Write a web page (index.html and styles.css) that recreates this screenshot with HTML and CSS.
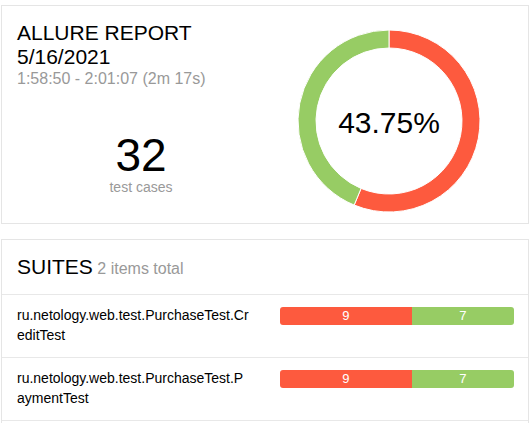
FILE: index.html
```html
<!DOCTYPE html>
<html>
<head>
<meta charset="utf-8">
<link rel="stylesheet" href="styles.css">
</head>
<body>
<div class="page">
  <section class="card summary">
    <div class="summary-left">
      <h1 class="title">ALLURE REPORT<br>5/16/2021</h1>
      <div class="subtitle">1:58:50 - 2:01:07 (2m 17s)</div>
      <div class="count">32</div>
      <div class="count-label">test cases</div>
    </div>
    <div class="summary-right">
      <svg class="donut" width="200" height="200" viewBox="0 0 200 200">
        <path class="arc-failed" d="M100,9 A91,91 0 1 1 65.176,184.073 L72.064,167.443 A73,73 0 1 0 100,27 Z"/>
        <path class="arc-passed" d="M65.176,184.073 A91,91 0 0 1 100,9 L100,27 A73,73 0 0 0 72.064,167.443 Z"/>
        <text class="donut-text" x="100" y="112" text-anchor="middle">43.75%</text>
      </svg>
    </div>
  </section>

  <section class="card suites">
    <div class="suites-head">
      <span class="suites-title">SUITES</span> <span class="suites-count">2 items total</span>
    </div>
    <div class="suite-row">
      <div class="suite-name">ru.netology.web.test.PurchaseTest.CreditTest</div>
      <div class="bar">
        <div class="bar-fill failed" style="flex: 9">9</div>
        <div class="bar-fill passed" style="flex: 7">7</div>
      </div>
    </div>
    <div class="suite-row">
      <div class="suite-name">ru.netology.web.test.PurchaseTest.PaymentTest</div>
      <div class="bar">
        <div class="bar-fill failed" style="flex: 9">9</div>
        <div class="bar-fill passed" style="flex: 7">7</div>
      </div>
    </div>
    <div class="suite-row"></div>
  </section>
</div>
</body>
</html>
```

FILE: styles.css
```css
* { box-sizing: border-box; }
html, body {
  margin: 0;
  padding: 0;
  background: #fff;
  font-family: "Liberation Sans", Arial, sans-serif;
  color: #000;
}
.page {
  padding: 5px 0 0 1px;
  width: 529px;
}
.card {
  width: 528px;
  border: 1px solid #e5e5e5;
  background: #fff;
}
.summary {
  display: flex;
  padding: 15px 15px 0 15px;
  height: 219px;
}
.summary-left {
  flex: 1;
  display: flex;
  flex-direction: column;
}
.summary-right {
  flex: 1;
  display: flex;
  justify-content: center;
}
.title {
  margin: 0;
  font-size: 21px;
  line-height: 24px;
  font-weight: normal;
}
.subtitle {
  font-size: 16px;
  line-height: 19px;
  color: #999;
}
.count {
  margin-top: 45px;
  font-size: 46px;
  line-height: 44px;
  text-align: center;
}
.count-label {
  font-size: 14px;
  line-height: 20px;
  color: #999;
  text-align: center;
}
.donut { display: block; }
.arc-failed { fill: #fd5a3e; stroke: #fff; stroke-width: 1; }
.arc-passed { fill: #97cc64; stroke: #fff; stroke-width: 1; }
.donut-text {
  font-family: "Liberation Sans", Arial, sans-serif;
  font-size: 30px;
  fill: #000;
}
.suites {
  margin-top: 15px;
}
.suites-head {
  padding: 15px;
  height: 55px;
  line-height: 24px;
  border-bottom: 1px solid #e8e8e8;
}
.suites-title { font-size: 21px; line-height: 24px; }
.suites-count { font-size: 16px; line-height: 16px; color: #999; }
.suite-row {
  display: grid;
  grid-template-columns: 233px 1fr;
  column-gap: 30px;
  padding: 10px 14px 12px 15px;
  border-bottom: 1px solid #e8e8e8;
  min-height: 63px;
}
.suite-name {
  font-size: 14px;
  line-height: 20px;
  word-break: break-all;
}
.bar {
  display: flex;
  height: 18px;
  margin-top: 2px;
  border-radius: 3px;
  overflow: hidden;
}
.bar-fill {
  color: #fff;
  font-size: 13px;
  line-height: 18px;
  text-align: center;
}
.bar-fill.failed { background: #fd5a3e; }
.bar-fill.passed { background: #97cc64; }
```
